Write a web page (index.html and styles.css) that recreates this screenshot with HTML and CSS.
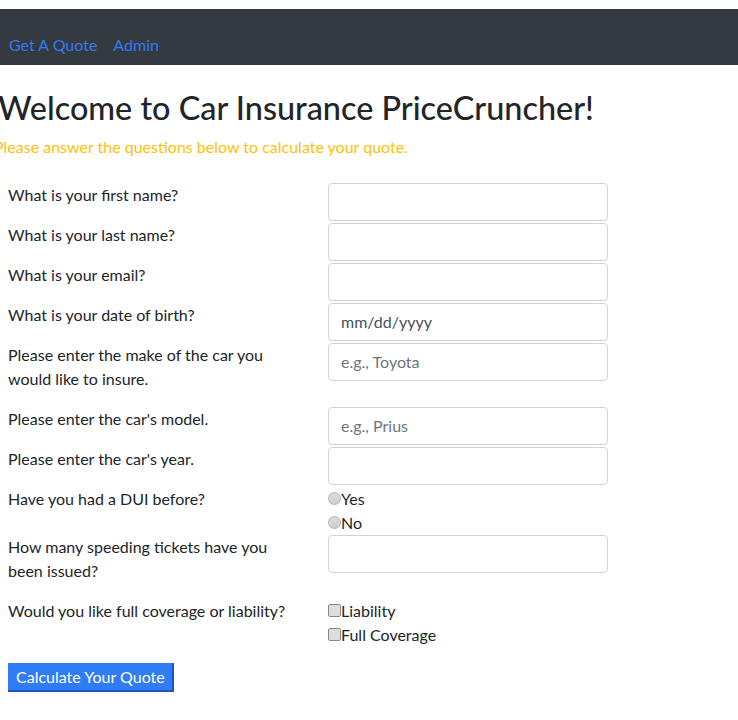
FILE: index.html
```html
<!DOCTYPE html>
<html lang="en">
<head>
<meta charset="utf-8">
<title>Car Insurance PriceCruncher</title>
<link rel="stylesheet" href="styles.css">
</head>
<body>
<nav class="navbar">
  <a class="nav-link" href="#">Get A Quote</a>
  <a class="nav-link" href="#">Admin</a>
</nav>
<main class="page">
  <h1 class="title">Welcome to Car Insurance PriceCruncher!</h1>
  <p class="subtitle">Please answer the questions below to calculate your quote.</p>
  <form class="quote-form">
    <div class="form-row">
      <label class="q" for="first">What is your first name?</label>
      <input class="field" id="first" type="text">
    </div>
    <div class="form-row">
      <label class="q" for="last">What is your last name?</label>
      <input class="field" id="last" type="text">
    </div>
    <div class="form-row">
      <label class="q" for="email">What is your email?</label>
      <input class="field" id="email" type="text">
    </div>
    <div class="form-row">
      <label class="q" for="dob">What is your date of birth?</label>
      <input class="field field-date" id="dob" type="text" placeholder="mm/dd/yyyy">
    </div>
    <div class="form-row">
      <label class="q" for="make">Please enter the make of the car you would like to insure.</label>
      <input class="field" id="make" type="text" placeholder="e.g., Toyota">
    </div>
    <div class="form-row">
      <label class="q" for="model">Please enter the car's model.</label>
      <input class="field" id="model" type="text" placeholder="e.g., Prius">
    </div>
    <div class="form-row">
      <label class="q" for="year">Please enter the car's year.</label>
      <input class="field" id="year" type="text">
    </div>
    <div class="form-row">
      <span class="q">Have you had a DUI before?</span>
      <div class="choices">
        <label class="choice"><input class="radio" type="radio" name="dui">Yes</label>
        <label class="choice"><input class="radio" type="radio" name="dui">No</label>
      </div>
    </div>
    <div class="form-row">
      <label class="q" for="tickets">How many speeding tickets have you been issued?</label>
      <input class="field" id="tickets" type="text">
    </div>
    <div class="form-row">
      <span class="q">Would you like full coverage or liability?</span>
      <div class="choices">
        <label class="choice"><input class="check" type="checkbox">Liability</label>
        <label class="choice"><input class="check" type="checkbox">Full Coverage</label>
      </div>
    </div>
    <button class="btn-submit" type="button">Calculate Your Quote</button>
  </form>
</main>
</body>
</html>
```
FILE: styles.css
```css
* { box-sizing: border-box; }

body {
  margin: 0;
  font-family: Lato, "Open Sans", sans-serif;
  font-size: 16px;
  line-height: 24px;
  color: #212529;
  background: #fff;
}

.navbar {
  margin-top: 9px;
  height: 56px;
  background: #343a40;
  display: flex;
  align-items: flex-end;
  gap: 16px;
  padding: 0 0 8px 9px;
}

.nav-link {
  color: #2f7cf6;
  text-decoration: none;
}

.page {
  padding: 0;
}

.title {
  margin: 24px 0 7px -2px;
  font-size: 32.4px;
  line-height: 38.9px;
  font-weight: 500;
  color: #212529;
}

.subtitle {
  margin: 0 0 24px -6px;
  color: #ffc107;
}

.quote-form {
  margin-left: 8px;
}

.form-row {
  display: grid;
  grid-template-columns: 320px 280px;
  align-items: start;
}

.q {
  display: block;
  padding-right: 30px;
  margin-bottom: 16px;
}

.field {
  display: block;
  width: 280px;
  height: 38px;
  margin: 0;
  padding: 6px 12px;
  border: 1px solid #ced4da;
  border-radius: 4px;
  font-family: inherit;
  font-size: 16px;
  color: #495057;
  background: #fff;
}

.field::placeholder {
  color: #6c757d;
}

.field-date::placeholder {
  color: #495057;
}

.choices {
  display: flex;
  flex-direction: column;
}

.choice {
  display: flex;
  align-items: center;
  height: 24px;
}

.radio,
.check {
  appearance: none;
  -webkit-appearance: none;
  width: 13px;
  height: 13px;
  margin: 0;
  border: 1px solid #9a9a9a;
  background: linear-gradient(#e9e9e9, #d6d6d6);
}

.radio {
  border-radius: 50%;
  border-color: #b4b4b4;
  background: linear-gradient(#dcdcdc, #cfcfcf);
}

.check {
  border-radius: 2px;
  border-color: #8a8a8a;
  background: #dedede;
}

.btn-submit {
  display: block;
  margin-top: 16px;
  height: 29px;
  padding: 0 7px 0 8px;
  border: none;
  border-right: 2px solid #1d56b8;
  border-bottom: 2px solid #1d56b8;
  background: #2f7cf6;
  color: #fff;
  font-family: inherit;
  font-size: 16px;
  line-height: 27px;
}
```
